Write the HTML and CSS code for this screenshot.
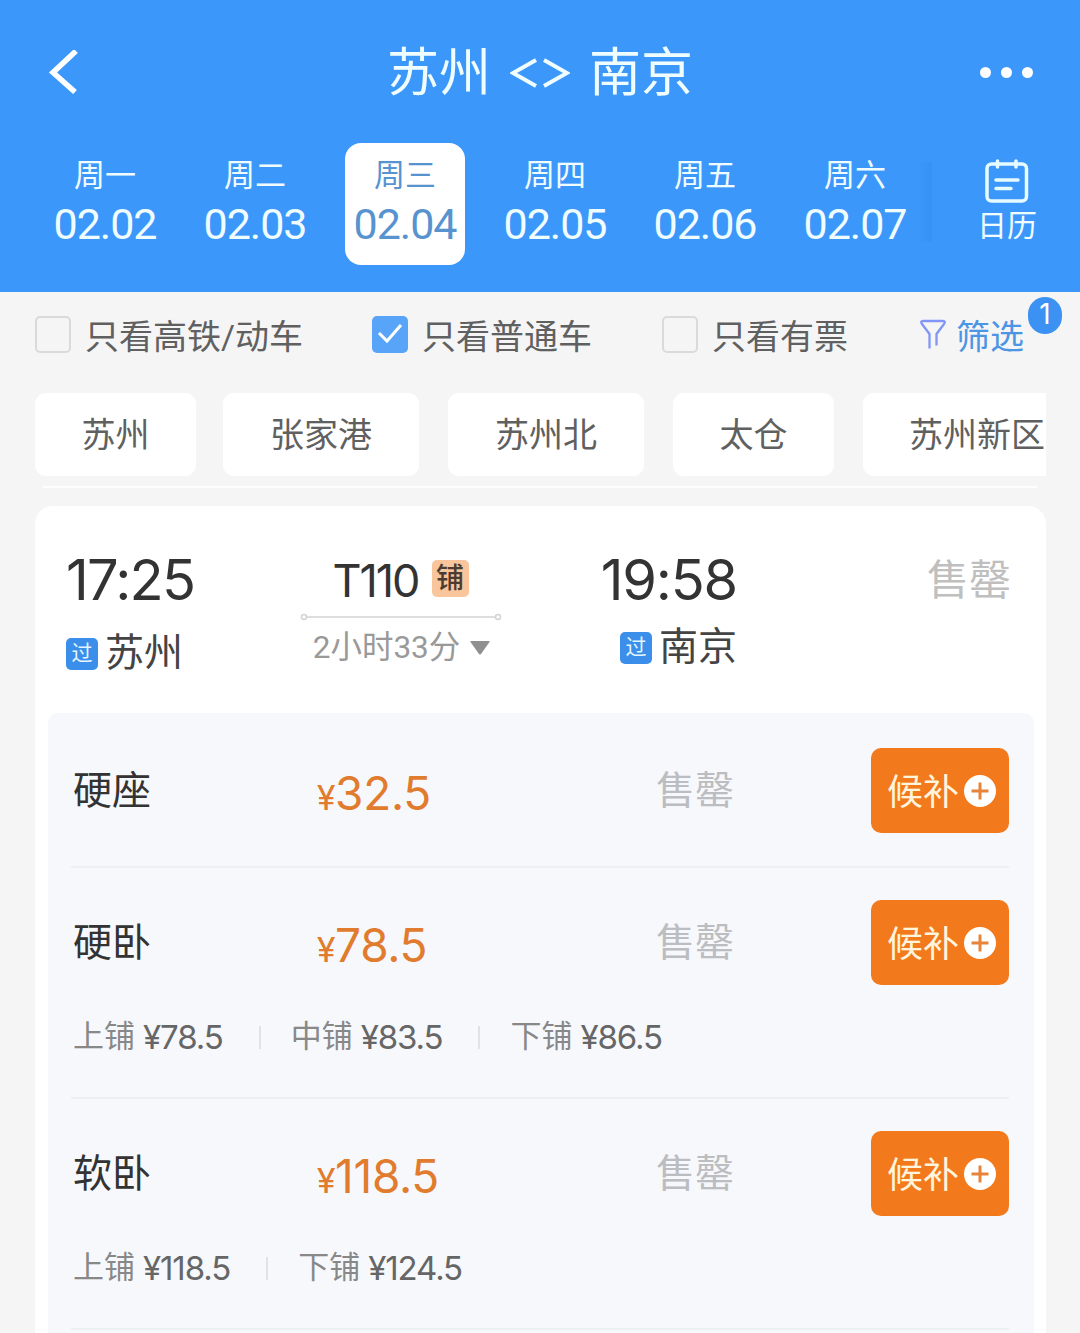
FILE: index.html
```
<!DOCTYPE html>
<html lang="zh-CN">
<head>
<meta charset="UTF-8">
<meta name="viewport" content="width=device-width, initial-scale=1.0">
<title>苏州 - 南京</title>
<link rel="stylesheet" href="styles.css">
</head>
<body>
<header class="header">
    <div class="title-bar">
        <svg class="back" width="32" height="44" viewBox="0 0 32 44"><path d="M29 1 6 22.500 28 42" fill="none" stroke="#fff" stroke-width="5.500"/></svg>
        <h1 class="title"><span>苏州</span>
            <svg width="60" height="32" viewBox="0 0 60 32" fill="none" stroke="#f0fdff" stroke-width="4"><path d="M26 3 3 16l23 13M34 3l23 13-23 13"/></svg>
            <span>南京</span></h1>
        <div class="more"><i></i><i></i><i></i></div>
    </div>
    <div class="date-bar">
        <div class="day"><span class="week">周一</span><span class="date">02.02</span></div>
        <div class="day"><span class="week">周二</span><span class="date">02.03</span></div>
        <div class="day active"><span class="week">周三</span><span class="date">02.04</span></div>
        <div class="day"><span class="week">周四</span><span class="date">02.05</span></div>
        <div class="day"><span class="week">周五</span><span class="date">02.06</span></div>
        <div class="day"><span class="week">周六</span><span class="date">02.07</span></div>
        <div class="shade"></div>
        <div class="calendar">
            <svg width="44" height="44" viewBox="0 0 44 44" fill="none" stroke="#e6fbff" stroke-width="3.500" stroke-linecap="round"><rect x="2" y="5" width="39.500" height="37" rx="4.500"/><path d="M12.500 2v6M31 2v6M11 21h22M11 29.500h15"/></svg>
            <span>日历</span>
        </div>
    </div>
</header>

<div class="filters">
    <label class="check first"><span class="box"></span>只看高铁/动车</label>
    <label class="check second"><span class="box checked"><svg width="36" height="36" viewBox="0 0 36 36"><path d="M7 17l8 8L29 9" fill="none" stroke="#fff" stroke-width="3"/></svg></span>只看普通车</label>
    <label class="check third"><span class="box"></span>只看有票</label>
    <div class="filter">
        <svg width="26" height="31" viewBox="0 0 26 31"><path d="M9.500 29.500V15L2 5Q0 2 3 2h20q3 0 1 3l-7.500 10v11.500" fill="none" stroke="#8196f7" stroke-width="2.300"/></svg>
        <span>筛选</span>
        <b class="badge">1</b>
    </div>
</div>

<div class="stations">
    <span class="station">苏州</span>
    <span class="station wide">张家港</span>
    <span class="station wide">苏州北</span>
    <span class="station">太仓</span>
    <span class="station last">苏州新区</span>
</div>
<div class="divider"></div>

<main class="card">
    <section class="train">
        <div class="from">
            <div class="time">17:25</div>
            <div class="place"><span class="pass">过</span>苏州</div>
        </div>
        <div class="info">
            <div class="number"><span>T110</span><span class="berth-tag">铺</span></div>
            <svg class="line" width="202" height="8" viewBox="0 0 202 8" fill="none" stroke="#d3d3d3" stroke-width="1.500"><circle cx="4" cy="4" r="2.500"/><path d="M7 4h188"/><circle cx="198" cy="4" r="2.500"/></svg>
            <div class="duration"><span>2小时33分</span><svg width="20" height="14" viewBox="0 0 20 14"><path d="M1 0h18q1 0 .5 1L11 13q-1 1-2 0L.5 1Q0 0 1 0z" fill="#8f8f8f"/></svg></div>
        </div>
        <div class="to">
            <div class="time">19:58</div>
            <div class="place"><span class="pass">过</span>南京</div>
        </div>
        <div class="status">售罄</div>
    </section>

    <section class="seats">
        <div class="seat">
            <div class="seat-main">
                <span class="name">硬座</span>
                <span class="price"><small>¥</small>32.5</span>
                <span class="sold">售罄</span>
                <button class="wait"><span>候补</span><svg width="32" height="32" viewBox="0 0 32 32"><circle cx="16" cy="16" r="16" fill="#fff"/><path d="M7.500 16h17M16 7.500v17" stroke="#e8843a" stroke-width="3"/></svg></button>
            </div>
        </div>
        <div class="seat">
            <div class="seat-main">
                <span class="name">硬卧</span>
                <span class="price"><small>¥</small>78.5</span>
                <span class="sold">售罄</span>
                <button class="wait"><span>候补</span><svg width="32" height="32" viewBox="0 0 32 32"><circle cx="16" cy="16" r="16" fill="#fff"/><path d="M7.500 16h17M16 7.500v17" stroke="#e8843a" stroke-width="3"/></svg></button>
            </div>
            <div class="berths">
                <span class="berth">上铺<em>¥78.5</em></span>
                <span class="berth">中铺<em>¥83.5</em></span>
                <span class="berth">下铺<em>¥86.5</em></span>
            </div>
        </div>
        <div class="seat">
            <div class="seat-main">
                <span class="name">软卧</span>
                <span class="price"><small>¥</small>118.5</span>
                <span class="sold">售罄</span>
                <button class="wait"><span>候补</span><svg width="32" height="32" viewBox="0 0 32 32"><circle cx="16" cy="16" r="16" fill="#fff"/><path d="M7.500 16h17M16 7.500v17" stroke="#e8843a" stroke-width="3"/></svg></button>
            </div>
            <div class="berths">
                <span class="berth">上铺<em>¥118.5</em></span>
                <span class="berth">下铺<em>¥124.5</em></span>
            </div>
        </div>
    </section>
</main>
</body>
</html>
```

FILE: styles.css
```
* {
    box-sizing: border-box;
}
body {
    margin: 0;
    width: 1080px;
    height: 1333px;
    overflow: hidden;
    background-color: #f5f5f5;
    color: #333;
    font-family: Roboto, "Noto Sans CJK SC", sans-serif;
    white-space: nowrap;
}
i, em {
    font-style: normal;
}
svg {
    display: block;
    flex: none;
}

.header {
    height: 292px;
    background-color: #3c97fb;
    color: #f0fdff;
}
.title-bar {
    display: flex;
    align-items: center;
    justify-content: space-between;
    height: 143px;
    padding: 0 46px 0 47px;
}
.back {
    width: 54px;
    padding-right: 22px;
}
.title {
    display: flex;
    align-items: center;
    gap: 20px;
    margin: 0 1px 0 0;
    padding-top: 4px;
    font-size: 52px;
    font-weight: 400;
    line-height: 60px;
}
.title svg {
    margin: -2px -1px 0;
}
.more {
    display: flex;
    gap: 10px;
    width: 54px;
    padding-top: 1px;
}
.more i {
    width: 11px;
    height: 11px;
    border-radius: 50%;
    background-color: #fff;
}
.date-bar {
    display: flex;
    padding-left: 45px;
}
.day {
    display: flex;
    flex-direction: column;
    align-items: center;
    width: 120px;
    height: 122px;
    margin-right: 30px;
    padding-top: 12px;
    border-radius: 16px;
}
.day.active {
    background-color: #fff;
    color: #5793cf;
}
.week {
    font-size: 31px;
    line-height: 41px;
}
.date {
    margin-top: 8px;
    font-size: 43px;
    line-height: 40px;
    letter-spacing: -1px;
}
.shade {
    width: 14px;
    height: 80px;
    margin: 19px 0 0 -27px;
    background: linear-gradient(to right, #3c97fb, #3892f3);
}
.calendar {
    display: flex;
    flex-direction: column;
    align-items: center;
    width: 60px;
    margin-left: 45px;
    padding-top: 16px;
    font-size: 30px;
    line-height: 40px;
}
.calendar span {
    margin-top: 3px;
}

.filters {
    display: flex;
    align-items: center;
    height: 86px;
    padding: 0 0 2px 35px;
    color: #606060;
    font-size: 34px;
}
.check {
    display: flex;
    align-items: center;
    gap: 14px;
}
.first {
    width: 337px;
}
.second {
    width: 290px;
}
.third {
    width: 258px;
}
.box {
    width: 36px;
    height: 37px;
    border: 2px solid #dadada;
    border-radius: 5px;
}
.box.checked {
    border: none;
    background-color: #58a4f8;
}
.filter {
    display: flex;
    align-items: center;
    gap: 10px;
    position: relative;
    color: #4c94e4;
}
.badge {
    position: absolute;
    left: 108px;
    top: -13px;
    width: 34px;
    height: 37px;
    border-radius: 17px;
    background-color: #3c92f2;
    color: #fff;
    font-family: Inter, sans-serif;
    font-size: 28px;
    font-weight: 400;
    line-height: 34px;
    text-align: center;
}

.stations {
    display: flex;
    gap: 29px;
    width: 1011px;
    height: 83px;
    margin: 15px 0 0 35px;
    overflow: hidden;
}
.station {
    flex: none;
    width: 161px;
    border-radius: 11px;
    background-color: #fff;
    color: #606060;
    font-size: 34px;
    line-height: 84px;
    text-align: center;
}
.station.wide {
    width: 196px;
}
.station:first-child {
    margin-right: -2px;
}
.station.last {
    width: 228px;
}
.divider {
    height: 2px;
    margin: 10px 43px 0;
    background-color: #fdfdfd;
}

.card {
    width: 1011px;
    height: 840px;
    margin: 18px 0 0 35px;
    padding: 0 13px;
    border-radius: 18px 18px 0 0;
    background-color: #fff;
}
.train {
    display: flex;
    height: 207px;
    padding: 44px 0 0 18px;
}
.from {
    width: 235px;
}
.time {
    font-family: Inter, sans-serif;
    font-size: 56px;
    line-height: 60px;
    letter-spacing: -1.7px;
}
.place {
    display: flex;
    align-items: center;
    gap: 7px;
    margin-top: 13px;
    color: #444;
    font-size: 39px;
    line-height: 60px;
}
.pass {
    width: 32px;
    height: 32px;
    margin-top: 1px;
    border-radius: 5px;
    background-color: #3b8fea;
    color: #e4f5ff;
    font-size: 21px;
    line-height: 31px;
    text-align: center;
}
.info {
    display: flex;
    flex-direction: column;
    align-items: center;
    width: 202px;
}
.number {
    display: flex;
    align-items: center;
    gap: 13px;
    height: 60px;
    margin-left: -3px;
    font-family: Inter, "Noto Sans CJK SC", sans-serif;
    font-size: 45px;
    letter-spacing: -2px;
}
.berth-tag {
    width: 37px;
    height: 37px;
    margin-top: -3px;
    border-radius: 5px;
    background-color: #f8c59c;
    color: #4b3b30;
    font-size: 28px;
    font-weight: 500;
    line-height: 36px;
    letter-spacing: 0;
    text-align: center;
}
.line {
    margin: 3px 0 0 -2px;
}
.duration {
    display: flex;
    align-items: center;
    gap: 10px;
    margin: 6px 0 0 -1px;
    color: #999;
    font-size: 31.5px;
    line-height: 41px;
}
.to {
    display: flex;
    flex-direction: column;
    align-items: flex-end;
    width: 235px;
}
.to .time {
    margin-right: 1px;
    letter-spacing: -1.2px;
}
.to .place {
    margin: 7px 1px 0 0;
}
.status {
    margin-left: 189px;
    padding-top: 1px;
    color: #bfbfbf;
    font-size: 42px;
    line-height: 60px;
}

.seats {
    width: 986px;
    height: 640px;
    padding: 3px 25px 0 23px;
    border-radius: 10px 10px 0 0;
    background-color: #f6f8fc;
}
.seat {
    padding-top: 32px;
    border-bottom: 2px solid #edf0f3;
    padding-bottom: 33px;
}
.seat-main {
    display: grid;
    grid-template-columns: 246px 339px 215px 138px;
    height: 85px;
    line-height: 86px;
}
.name {
    padding-left: 2px;
    font-size: 39px;
}
.price {
    padding-top: 2px;
    color: #e17c2e;
    font-family: Inter, sans-serif;
    font-size: 46px;
    letter-spacing: -0.3px;
}
.price small {
    font-family: Roboto, sans-serif;
    font-size: 35px;
}
.sold {
    color: #bbbdc0;
    font-size: 39px;
}
.wait {
    display: flex;
    align-items: center;
    gap: 5px;
    height: 85px;
    padding: 0 0 0 16px;
    border: none;
    border-radius: 10px;
    background-color: #f27a1d;
    color: #fff4dc;
    font-family: inherit;
    font-size: 36px;
}
.wait span {
    padding-bottom: 4px;
}
.berths {
    display: flex;
    height: 80px;
    margin-bottom: -33px;
    padding: 32px 0 0 2px;
    box-sizing: content-box;
    color: #888;
    font-size: 31px;
    line-height: 42px;
}
.berth {
    display: flex;
    align-items: center;
    height: 40px;
}
.berth em {
    margin-left: 8px;
    color: #666;
    font-family: Inter, sans-serif;
    font-size: 33px;
    line-height: 40px;
    letter-spacing: -1.1px;
}
.berth + .berth::before {
    content: "";
    width: 2px;
    height: 23px;
    margin: 0 30px 0 36px;
    background-color: #dfe2e6;
}
```
